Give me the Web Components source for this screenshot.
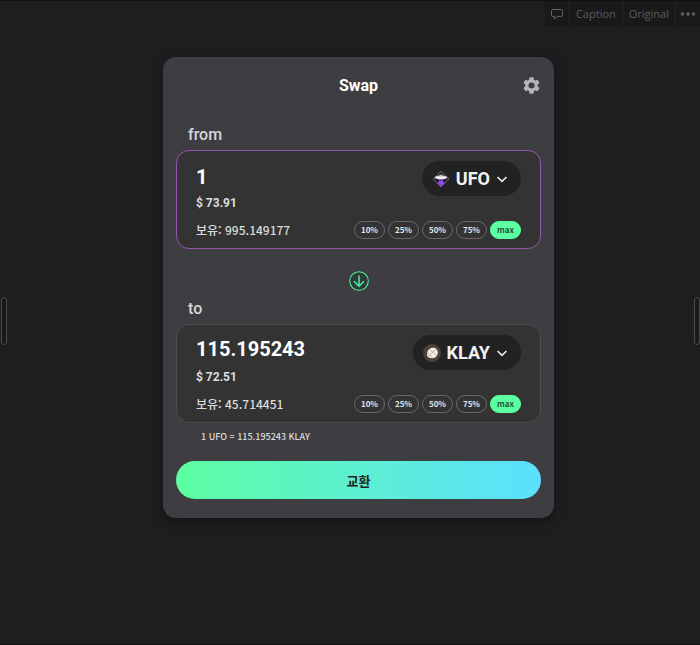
<!DOCTYPE html>
<html lang="ko">
<head>
<meta charset="utf-8">
<meta name="viewport" content="width=device-width, initial-scale=1">
<title>Swap</title>
<style>
    body {
        margin: 0;
        background: #1e1e20;
        color: #fff;
        font-family: Roboto, "Noto Sans CJK KR", sans-serif;
    }
</style>
</head>
<body>
<swap-page>
    <media-toolbar slot="toolbar"></media-toolbar>
    <swap-card heading="Swap">
        <token-panel label="from" amount="1" value="$ 73.91" balance="995.149177" symbol="UFO" editable>
            <svg slot="icon" viewBox="0 0 18 18" width="18" height="18" aria-hidden="true">
                <path d="M9 1.200L16.800 9 9 16.800 1.200 9z" fill="#241f28" stroke="#7d7681" stroke-width=".9"/>
                <path d="M7.200 8.500h3.600l.4 3.500 1.500 1L9 16.400 5.300 13l1.500-1z" fill="#9a45f5"/>
                <path d="M7.200 9h3.600v2H7.200z" fill="#7430bd"/>
                <ellipse cx="9" cy="7.400" rx="6.200" ry="1.800" fill="#f4eef5"/>
                <path d="M6.500 6.500C6.800 3.700 11.200 3.700 11.500 6.500z" fill="#b9b3bb"/>
            </svg>
        </token-panel>
        <button slot="flip" type="button" aria-label="Flip">
            <svg viewBox="0 0 20 20" width="20" height="20" fill="none" stroke="#4ef09a" aria-hidden="true">
                <circle cx="10" cy="10" r="9.300" fill="#2f3a39" stroke-width="1.100"/>
                <path d="M10 4.500v10.500M5 10.300l5 4.900 5-4.900" stroke-width="1.500"/>
            </svg>
        </button>
        <token-panel slot="to" label="to" amount="115.195243" value="$ 72.51" balance="45.714451" symbol="KLAY">
            <svg slot="icon" viewBox="0 0 18 18" width="18" height="18" aria-hidden="true">
                <circle cx="9" cy="9" r="9" fill="#4b4237"/>
                <path d="M4 10.500C4 6 7 3.800 10 3.800s4.800 2 4.800 5-2.300 5.400-5.500 5.400S4 13 4 10.500z" fill="#f3f0ee"/>
                <path d="M6.500 5.500l7.500 6M13 4.800L5.300 12.500M4.500 8.500l5 5.500" stroke="#9c9690" stroke-width=".7" fill="none"/>
            </svg>
        </token-panel>
        <span slot="rate">1 UFO = 115.195243 KLAY</span>
        <span slot="action">교환</span>
    </swap-card>
</swap-page>

<script>
class SwapPage extends HTMLElement {
    constructor() {
        super();
        this.attachShadow({ mode: 'open' });
        this.shadowRoot.innerHTML = `
            <style>
                :host {
                    display: block;
                    position: relative;
                    box-sizing: border-box;
                    min-height: 100vh;
                    border-top: 1px solid #111112;
                    border-bottom: 1px solid #111112;
                }

                main {
                    display: flex;
                    justify-content: center;
                    padding: 31px 0 30px 17px;
                }

                .handle {
                    position: absolute;
                    top: 46%;
                    left: 1px;
                    box-sizing: border-box;
                    width: 6px;
                    height: 48px;
                    border: 1px solid #4b4b4d;
                    border-radius: 3px;
                    background: #19191a;
                }

                .handle.end {
                    left: auto;
                    right: 0;
                }
            </style>
            <slot name="toolbar"></slot>
            <main><slot></slot></main>
            <div class="handle"></div>
            <div class="handle end"></div>
        `;
    }
}

class MediaToolbar extends HTMLElement {
    constructor() {
        super();
        this.attachShadow({ mode: 'open' });
        this.shadowRoot.innerHTML = `
            <style>
                :host {
                    display: flex;
                    justify-content: flex-end;
                    height: 25px;
                }

                button {
                    display: flex;
                    align-items: center;
                    padding: 0 6px;
                    border: 0;
                    border-right: 1px solid #262628;
                    background: #19191a;
                    color: #5b5b5d;
                    font: 11px "Open Sans", sans-serif;
                }

                button:first-child {
                    border-radius: 0 0 0 3px;
                }

                button:last-child {
                    padding: 0 4px;
                    border-right: 0;
                }
            </style>
            <button type="button" aria-label="Comment">
                <svg viewBox="0 0 12 12" width="12" height="12" fill="none" stroke="#626264" aria-hidden="true">
                    <path d="M2 1.500h8q1.500 0 1.500 1.500v4q0 1.500-1.500 1.500H6L3.500 11V8.500H2Q.5 8.500.5 7V3Q.5 1.500 2 1.500z"/>
                </svg>
            </button>
            <button type="button">Caption</button>
            <button type="button">Original</button>
            <button type="button" aria-label="More">
                <svg viewBox="0 0 16 4" width="16" height="4" fill="#626264" aria-hidden="true">
                    <circle cx="2.500" cy="2" r="1.800"/><circle cx="8" cy="2" r="1.800"/><circle cx="13.500" cy="2" r="1.800"/>
                </svg>
            </button>
        `;
    }
}

class SwapCard extends HTMLElement {
    constructor() {
        super();
        this.attachShadow({ mode: 'open' });
        this.shadowRoot.innerHTML = `
            <style>
                :host {
                    display: block;
                    box-sizing: border-box;
                    width: 391px;
                    max-width: 100%;
                    padding: 16px 13px 19px;
                    border-radius: 13px;
                    background: #3e3d41;
                    box-shadow: 0 3px 12px rgba(0,0,0,0.35);
                }

                header {
                    display: grid;
                    grid-template-columns: 1fr auto 1fr;
                    align-items: center;
                    height: 24px;
                    margin-bottom: 27px;
                }

                h1 {
                    grid-column: 2;
                    margin: 0;
                    font-size: 16px;
                    font-weight: 700;
                }

                button {
                    display: block;
                    padding: 0;
                    border: 0;
                    background: none;
                }

                .settings {
                    justify-self: end;
                    padding: 1px 1px 0 0;
                }

                .settings svg {
                    display: block;
                }

                .flip {
                    display: flex;
                    justify-content: center;
                    padding: 22px 0 7px;
                }

                ::slotted(button) {
                    width: 20px;
                    height: 20px;
                    padding: 0;
                    border: 0;
                    background: none;
                }

                p {
                    margin: 0 0 16px 25px;
                    padding-top: 6px;
                    color: #dcdcde;
                    font: 500 9px/16px "Noto Sans CJK KR", sans-serif;
                }

                .action {
                    width: 100%;
                    height: 38px;
                    border-radius: 19px;
                    background: linear-gradient(90deg, #5cffa1, #5be0ff);
                    color: #222;
                    font: 700 13px "Noto Sans CJK KR", sans-serif;
                }
            </style>
            <header>
                <h1></h1>
                <button class="settings" type="button" aria-label="Settings">
                    <svg viewBox="2 2 20 20" width="17" height="17" fill="#b5b5b7" aria-hidden="true">
                        <path d="M19.140 12.940c.04-.3.06-.61.06-.94s-.02-.64-.07-.94l2.030-1.580a.49.49 0 0 0 .12-.61l-1.920-3.320a.49.49 0 0 0-.59-.22l-2.390.96a7 7 0 0 0-1.620-.94L14.400 2.810a.48.48 0 0 0-.48-.41h-3.840a.47.47 0 0 0-.47.41L9.250 5.350a7.300 7.300 0 0 0-1.620.94l-2.390-.96a.48.48 0 0 0-.59.22L2.740 8.870a.47.47 0 0 0 .12.61l2.030 1.580a6 6 0 0 0 0 1.880l-2.030 1.580a.49.49 0 0 0-.12.61l1.920 3.320c.12.22.37.29.59.22l2.390-.96c.5.38 1.030.7 1.620.94l.36 2.540c.05.24.24.41.48.41h3.840c.24 0 .44-.17.47-.41l.36-2.540a7 7 0 0 0 1.620-.94l2.390.96c.22.08.47 0 .59-.22l1.920-3.320a.47.47 0 0 0-.12-.61zM12 15.600a3.600 3.600 0 1 1 0-7.200 3.600 3.600 0 0 1 0 7.200z"/>
                    </svg>
                </button>
            </header>
            <slot></slot>
            <div class="flip"><slot name="flip"></slot></div>
            <slot name="to"></slot>
            <p><slot name="rate"></slot></p>
            <button class="action" type="button"><slot name="action"></slot></button>
        `;
    }

    connectedCallback() {
        this.shadowRoot.querySelector('h1').textContent = this.getAttribute('heading');
    }
}

class TokenPanel extends HTMLElement {
    constructor() {
        super();
        this.attachShadow({ mode: 'open' });
        this.shadowRoot.innerHTML = `
            <style>
                :host {
                    --panel-border: #4c4c4e;
                    display: block;
                }

                :host([editable]) {
                    --panel-border: #9455ae;
                }

                label {
                    display: block;
                    padding: 0 0 5px 12px;
                    color: #d6d6d9;
                    font-size: 16px;
                    font-weight: 500;
                    line-height: 21px;
                }

                .box {
                    box-sizing: border-box;
                    padding: 10px 19px 9px;
                    border: 1px solid var(--panel-border);
                    border-radius: 13px;
                    background: #333;
                }

                .row {
                    display: flex;
                    align-items: center;
                    justify-content: space-between;
                }

                input {
                    flex: 1;
                    align-self: flex-start;
                    min-width: 0;
                    height: 32px;
                    padding: 0;
                    border: 0;
                    outline: 0;
                    background: none;
                    color: #fff;
                    font: 700 20px Roboto, sans-serif;
                }

                input:read-only {
                    height: 28px;
                }

                .token {
                    display: flex;
                    align-items: center;
                    gap: 6px;
                    height: 35px;
                    padding: 0 13px 0 10px;
                    border: 0;
                    border-radius: 18px;
                    background: #222;
                    color: #f2f2f2;
                    font: 700 18px Roboto, sans-serif;
                }

                .value {
                    margin-bottom: 11px;
                    color: #dedede;
                    font-size: 12px;
                    font-weight: 700;
                    line-height: 14px;
                }

                .balance {
                    color: #dcdcdc;
                    font: 500 12px/18px "Noto Sans CJK KR", sans-serif;
                }

                .shares {
                    display: flex;
                    gap: 3px;
                }

                .shares button {
                    box-sizing: border-box;
                    width: 31px;
                    height: 18px;
                    padding: 0;
                    border: 1px solid #68686a;
                    border-radius: 9px;
                    background: none;
                    color: #e4e4e4;
                    font: 700 8px/12px "Noto Sans CJK KR", sans-serif;
                }

                .shares .max {
                    border-color: #5cffa1;
                    background: #5cffa1;
                    color: #22553a;
                }
            </style>
            <label for="amount"></label>
            <div class="box">
                <div class="row">
                    <input id="amount" type="text" inputmode="decimal">
                    <button class="token" type="button">
                        <slot name="icon"></slot>
                        <span class="symbol"></span>
                        <svg viewBox="0 0 12 12" width="12" height="12" fill="none" stroke="#eee" stroke-width="1.600" aria-hidden="true">
                            <path d="M1.500 4L6 8.300 10.500 4"/>
                        </svg>
                    </button>
                </div>
                <div class="value"></div>
                <div class="row">
                    <span class="balance"></span>
                    <div class="shares">
                        <button type="button">10%</button>
                        <button type="button">25%</button>
                        <button type="button">50%</button>
                        <button type="button">75%</button>
                        <button class="max" type="button">max</button>
                    </div>
                </div>
            </div>
        `;
    }

    connectedCallback() {
        const root = this.shadowRoot;
        const input = root.querySelector('input');
        root.querySelector('label').textContent = this.getAttribute('label');
        input.value = this.getAttribute('amount');
        input.readOnly = !this.hasAttribute('editable');
        root.querySelector('.symbol').textContent = this.getAttribute('symbol');
        root.querySelector('.value').textContent = this.getAttribute('value');
        root.querySelector('.balance').textContent = '보유: ' + this.getAttribute('balance');
    }
}

customElements.define('swap-page', SwapPage);
customElements.define('media-toolbar', MediaToolbar);
customElements.define('swap-card', SwapCard);
customElements.define('token-panel', TokenPanel);
</script>
</body>
</html>
